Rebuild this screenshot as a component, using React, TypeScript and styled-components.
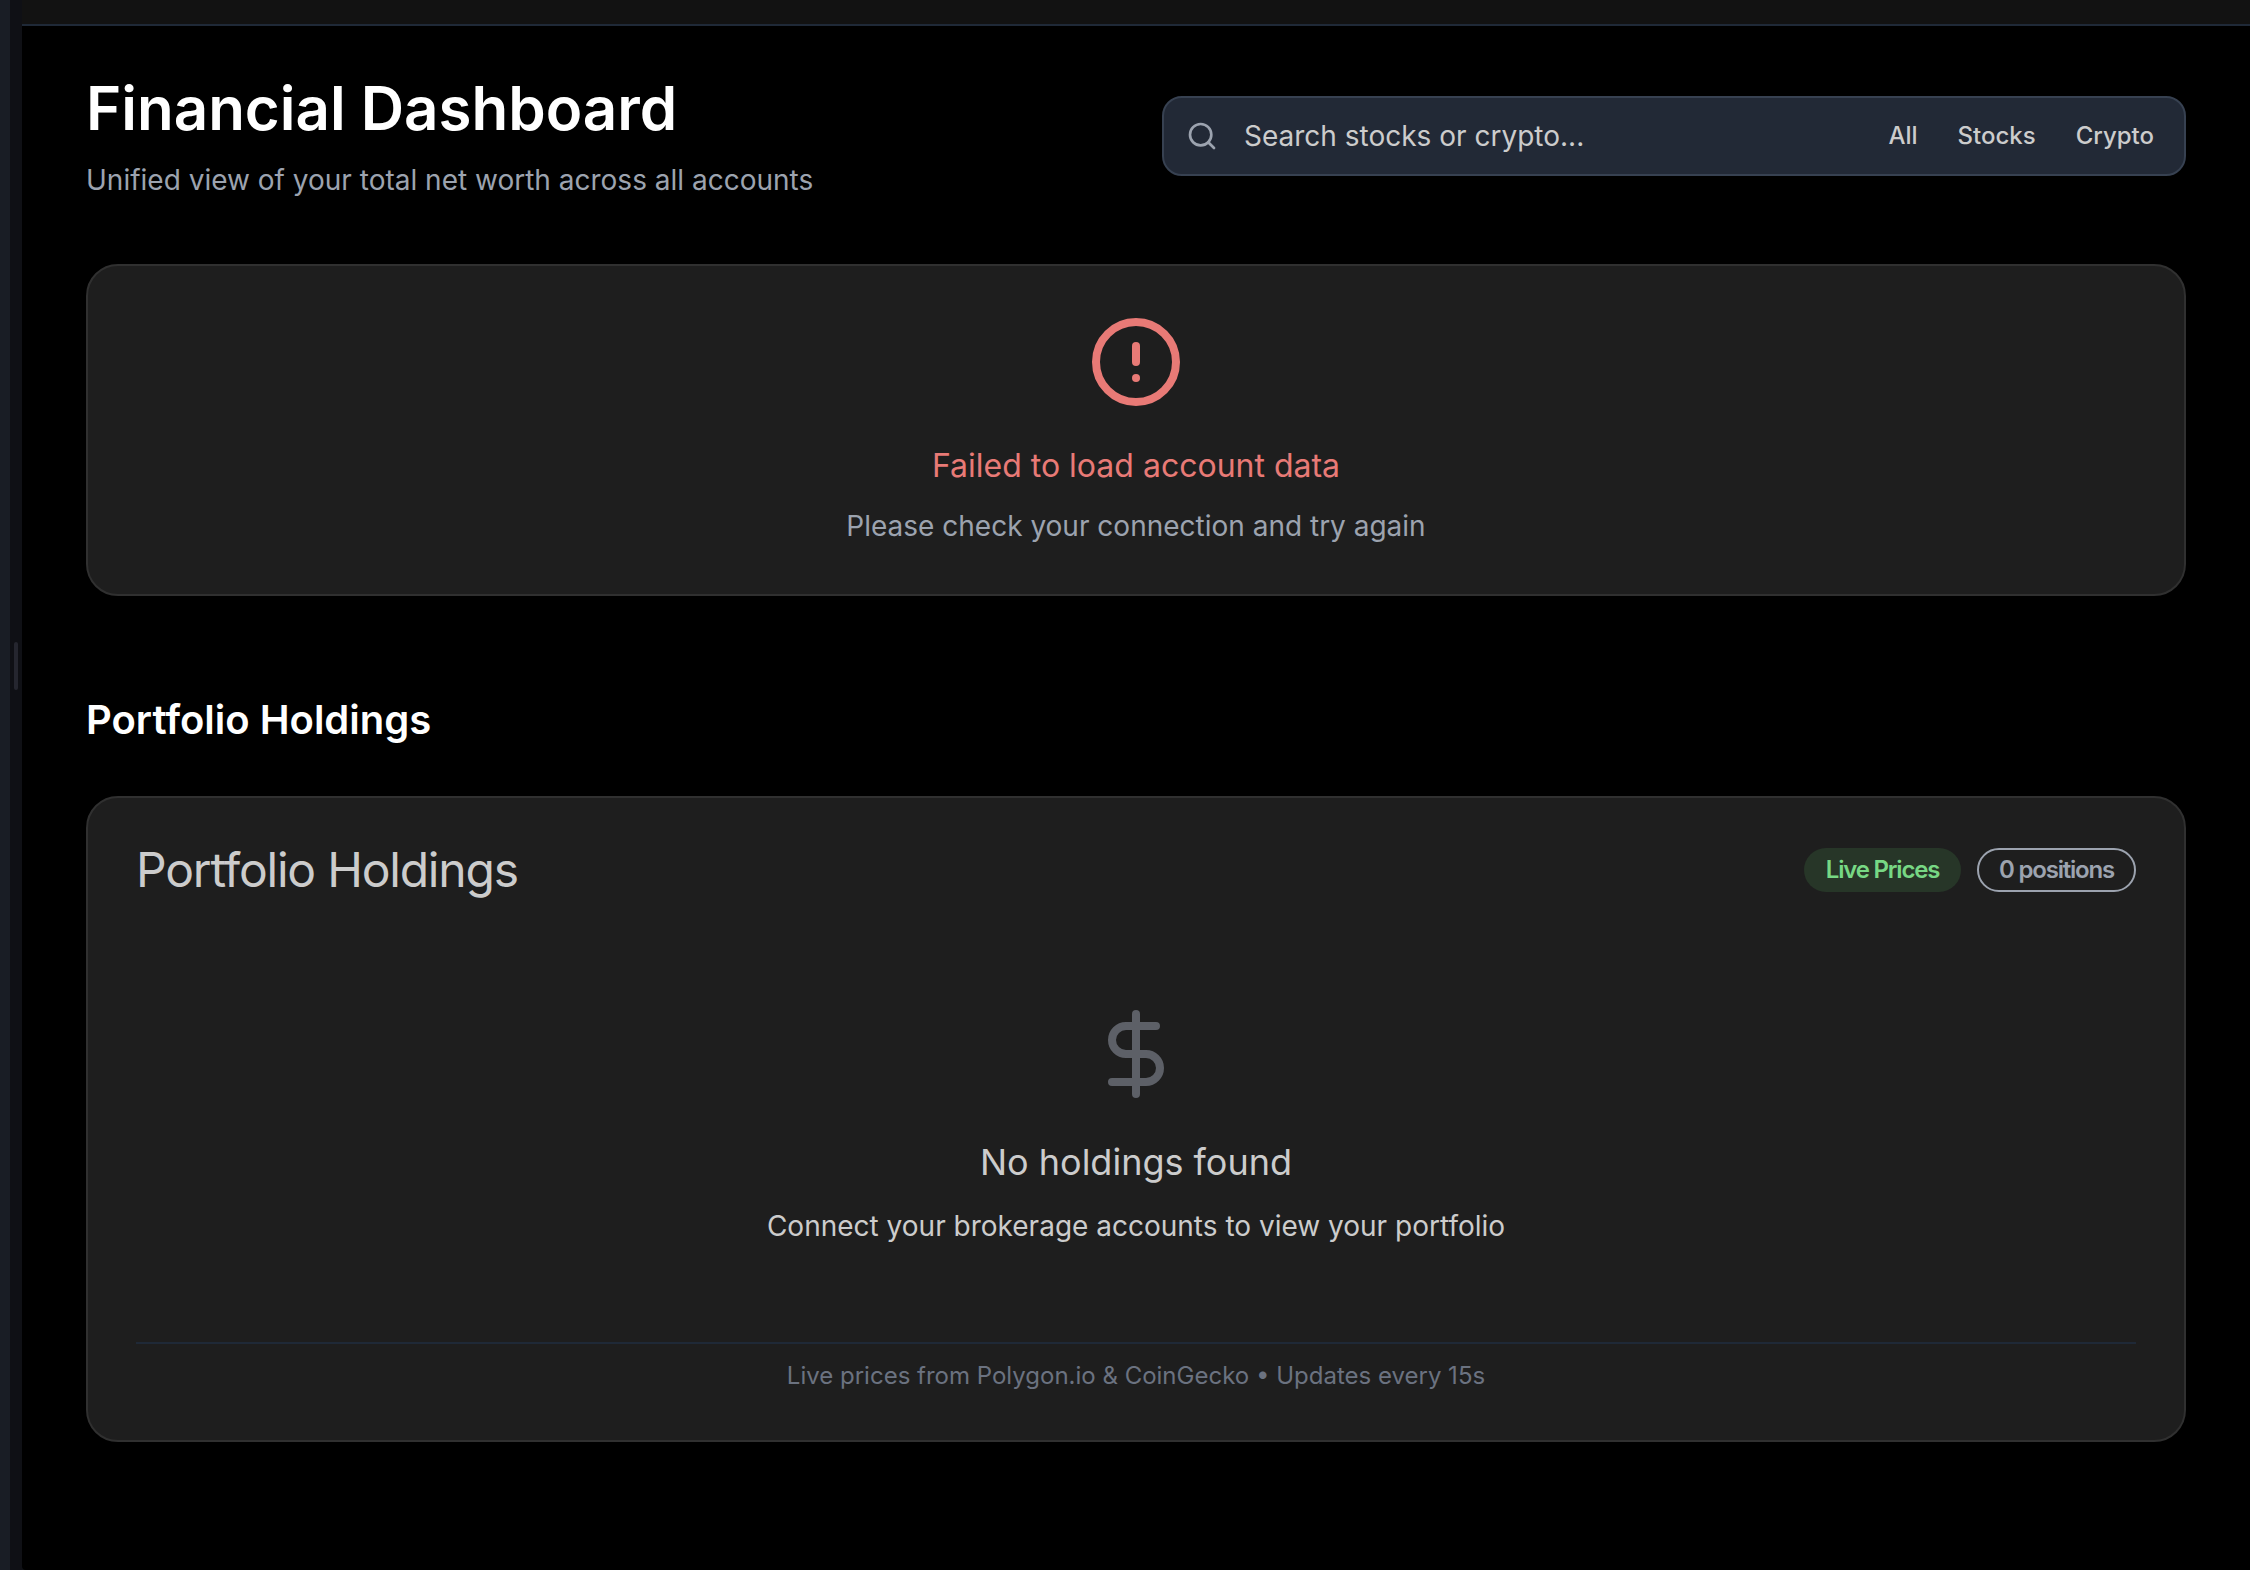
import React from "react";
import styled, { createGlobalStyle } from "styled-components";
import { CircleAlert, DollarSign, Search } from "lucide-react";

const GlobalStyle = createGlobalStyle`
  * { box-sizing: border-box; }
  html, body { margin: 0; padding: 0; background: #fff; }
  body { font-family: Inter, "Liberation Sans", sans-serif; overflow: hidden; }
  h1, h2, h3, p { margin: 0; }
`;

const Window = styled.div`
  display: flex;
  width: 2250px;
  height: 1570px;
  background: #0f1015;
`;

const SidebarEdge = styled.div`
  width: 10px;
  background: #191d25;
`;

const ResizeRail = styled.div`
  width: 12px;
  display: flex;
  justify-content: center;
  padding-top: 642px;
  background: #0f1015;
`;

const ResizeGrip = styled.div`
  width: 4px;
  height: 48px;
  border-radius: 2px;
  background: #25262f;
`;

const Main = styled.main`
  flex: 1;
  display: flex;
  flex-direction: column;
  background: #000;
  border-bottom-left-radius: 4px;
`;

const TopBar = styled.div`
  height: 26px;
  background: #121212;
  border-bottom: 2px solid #1f2937;
`;

const Content = styled.div`
  display: flex;
  flex-direction: column;
  padding: 46px 64px 0;
`;

const Header = styled.header`
  display: flex;
  align-items: center;
  justify-content: space-between;
  margin-bottom: 64px;
`;

const Heading = styled.div`
  display: flex;
  flex-direction: column;
  gap: 16px;
`;

const Title = styled.h1`
  font-size: 60px;
  line-height: 72px;
  font-weight: 600;
  color: #fff;
`;

const Body = styled.p<{ $color: string }>`
  font-size: 28px;
  line-height: 40px;
  color: ${(p) => p.$color};
`;

const SearchBox = styled.div`
  display: flex;
  align-items: center;
  width: 1024px;
  height: 80px;
  padding: 0 30px 0 22px;
  border: 2px solid #374151;
  border-radius: 20px;
  background: #222936;
  color: #9ca3af;
`;

const Placeholder = styled.span`
  flex: 1;
  margin-left: 26px;
  font-size: 28px;
  line-height: 40px;
  color: #cccccc;
`;

const Filters = styled.div`
  display: flex;
  gap: 40px;
`;

const Filter = styled.span`
  font-size: 24px;
  line-height: 32px;
  font-weight: 500;
  color: #cccccc;
`;

const Card = styled.section`
  display: flex;
  flex-direction: column;
  padding: 48px;
  border: 2px solid #303030;
  border-radius: 32px;
  background: #1e1e1e;
`;

const Message = styled.div<{ $top?: number; $bottom?: number }>`
  display: flex;
  flex-direction: column;
  align-items: center;
  padding: ${(p) => p.$top ?? 0}px 0 ${(p) => p.$bottom ?? 0}px;
  text-align: center;
`;

const ErrorTitle = styled.p`
  margin: 32px 0 16px;
  font-size: 32px;
  line-height: 48px;
  color: #e87a76;
`;

const EmptyTitle = styled.p`
  margin: 32px 0 16px;
  font-size: 36px;
  line-height: 56px;
  color: #cccccc;
`;

const SectionTitle = styled.h2`
  margin: 96px 0 48px;
  font-size: 40px;
  line-height: 56px;
  font-weight: 600;
  color: #fff;
`;

const CardHeader = styled.div`
  display: flex;
  align-items: center;
  justify-content: space-between;
`;

const CardTitle = styled.h3`
  font-size: 48px;
  line-height: 48px;
  font-weight: 400;
  letter-spacing: -1.2px;
  color: #cccccc;
`;

const Badges = styled.div`
  display: flex;
  gap: 16px;
  letter-spacing: -1.2px;
`;

const Badge = styled.span<{ $live?: boolean }>`
  display: flex;
  align-items: center;
  justify-content: center;
  width: ${(p) => (p.$live ? 157 : 159)}px;
  height: 44px;
  border-radius: 22px;
  border: 2px solid ${(p) => (p.$live ? "transparent" : "#9ca3af")};
  background: ${(p) => (p.$live ? "#273628" : "transparent")};
  font-size: 24px;
  line-height: 32px;
  font-weight: 600;
  color: ${(p) => (p.$live ? "#77d884" : "#9ca3af")};
`;

const Footnote = styled.p`
  padding-top: 16px;
  border-top: 2px solid #1f2937;
  font-size: 24px;
  line-height: 32px;
  text-align: center;
  color: #6b7280;
`;

export default function App() {
  return (
    <>
      <GlobalStyle />
      <Window>
        <SidebarEdge />
        <ResizeRail>
          <ResizeGrip />
        </ResizeRail>
        <Main>
          <TopBar />
          <Content>
            <Header>
              <Heading>
                <Title>Financial Dashboard</Title>
                <Body $color="#9ca3af">Unified view of your total net worth across all accounts</Body>
              </Heading>
              <SearchBox>
                <Search size={32} strokeWidth={2} />
                <Placeholder>Search stocks or crypto...</Placeholder>
                <Filters>
                  <Filter>All</Filter>
                  <Filter>Stocks</Filter>
                  <Filter>Crypto</Filter>
                </Filters>
              </SearchBox>
            </Header>
            <Card>
              <Message>
                <CircleAlert size={96} color="#e87a76" />
                <ErrorTitle>Failed to load account data</ErrorTitle>
                <Body $color="#9ca3af">Please check your connection and try again</Body>
              </Message>
            </Card>
            <SectionTitle>Portfolio Holdings</SectionTitle>
            <Card>
              <CardHeader>
                <CardTitle>Portfolio Holdings</CardTitle>
                <Badges>
                  <Badge $live>Live Prices</Badge>
                  <Badge>0 positions</Badge>
                </Badges>
              </CardHeader>
              <Message $top={112} $bottom={96}>
                <DollarSign size={96} color="#5d6067" />
                <EmptyTitle>No holdings found</EmptyTitle>
                <Body $color="#cccccc">Connect your brokerage accounts to view your portfolio</Body>
              </Message>
              <Footnote>Live prices from Polygon.io &amp; CoinGecko • Updates every 15s</Footnote>
            </Card>
          </Content>
        </Main>
      </Window>
    </>
  );
}
